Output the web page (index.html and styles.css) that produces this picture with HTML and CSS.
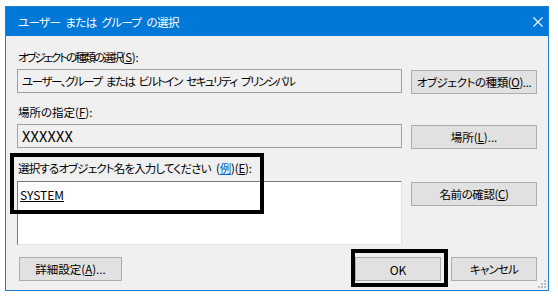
FILE: index.html
```html
<!DOCTYPE html>
<html lang="ja">
<head>
<meta charset="utf-8">
<title>ユーザー または グループ の選択</title>
<link rel="stylesheet" href="styles.css">
</head>
<body>
<div class="dlg">
  <div class="titlebar">
    <span class="title">ユーザー または グループ の選択</span>
    <span class="close"><svg width="10" height="10" viewBox="0 0 10 10"><path d="M0.5 0.5 L9.5 9.5 M9.5 0.5 L0.5 9.5" stroke="#fff" stroke-width="1.1" fill="none"/></svg></span>
  </div>
  <div class="body">
    <div class="grid">
      <div class="label first"><span class="jp">オブジェクトの種類の選択</span>(<u>S</u>):</div>
      <div class="field kana">ユーザー、グループ または ビルトイン セキュリティ プリンシパル</div>
      <div class="btn b1 bt-obj">オブジェクトの種類(<u>O</u>)...</div>

      <div class="label second">場所の指定(<u>F</u>):</div>
      <div class="field big">XXXXXX</div>
      <div class="btn b1">場所(<u>L</u>)...</div>

      <div class="label third"><span class="jp3">選択するオブジェクト名を入力してください</span> (<span class="link">例</span>)(<u>E</u>):</div>
      <div class="area"><u>SYSTEM</u></div>
      <div class="btn b3 bt-chk">名前の確認(<u>C</u>)</div>
    </div>
    <div class="footer">
      <div class="btn adv">詳細設定(<u>A</u>)...</div>
      <div class="right">
        <div class="btn ok">OK</div>
        <div class="btn cancel">キャンセル</div>
      </div>
    </div>
  </div>
  <div class="hl hl-name"></div>
  <div class="hl hl-ok"></div>
  <div class="grip">
    <i></i><i></i><i></i><i></i><i></i><i></i>
  </div>
</div>
</body>
</html>
```

FILE: styles.css
```css
html, body {
  margin: 0;
  padding: 0;
  background: #ffffff;
}
body {
  font-family: "Noto Sans CJK JP", "Noto Sans", sans-serif;
  font-size: 11.5px;
  color: #000;
  font-feature-settings: "palt" 1;
}
.dlg {
  position: relative;
  margin: 6px 0 0 5px;
  width: 544px;
  height: 285px;
  box-sizing: border-box;
  border: 1px solid #1f80d4;
  background: #f0f0f0;
}
.titlebar {
  height: 29px;
  background: #0078d7;
  display: flex;
  align-items: center;
  justify-content: space-between;
  padding: 0 0 0 12px;
}
.title {
  color: #fff;
  font-size: 11.5px;
  line-height: 16px;
  letter-spacing: -0.6px;
  word-spacing: 3px;
}
.close {
  width: 20px;
  height: 29px;
  display: flex;
  align-items: center;
  justify-content: center;
}
.close svg { display: block; }
.body {
  padding: 13px 11px 0 11px;
}
.grid {
  display: grid;
  grid-template-columns: 385px 1fr;
  column-gap: 9px;
  align-items: start;
}
.label {
  grid-column: 1 / span 2;
  height: 16px;
  line-height: 16px;
  padding-left: 1px;
  white-space: nowrap;
}
.first { letter-spacing: -0.2px; }
.first .jp { letter-spacing: -2.1px; }
.second { margin-top: 10px; }
.third { margin-top: 11px; letter-spacing: -0.2px; word-spacing: 3px; }
.third .jp3 { letter-spacing: -0.85px; }
.field {
  margin-top: 4px;
  height: 24px;
  box-sizing: border-box;
  border: 1px solid #a0a0a0;
  background: #f0f0f0;
  padding: 0 4px;
  line-height: 22px;
  white-space: nowrap;
  overflow: hidden;
}
.field.kana { letter-spacing: -1.45px; word-spacing: 3px; }
.field.big {
  font-size: 14.5px;
  letter-spacing: 0.2px;
}
.area {
  margin-top: 5px;
  height: 64px;
  box-sizing: border-box;
  background: #fff;
  border-top: 1px solid #7a7a7a;
  border-left: 1px solid #7a7a7a;
  border-right: 1px solid #e3e3e3;
  border-bottom: 1px solid #e3e3e3;
  padding: 5px 2px;
  line-height: 16px;
  font-size: 12px;
}
.btn {
  box-sizing: border-box;
  height: 24px;
  background: #e1e1e1;
  border: 1px solid #adadad;
  display: flex;
  align-items: center;
  justify-content: center;
  white-space: nowrap;
}
.b1 { margin-top: 5px; }
.b3 { margin-top: 6px; }
.bt-obj { letter-spacing: -0.4px; }
.bt-chk { letter-spacing: -0.4px; }
.footer {
  margin-top: 12px;
  display: flex;
  justify-content: space-between;
  align-items: center;
}
.adv {
  margin-left: 2px;
  width: 103px;
}
.right {
  display: flex;
  gap: 10px;
}
.ok, .cancel { width: 86px; }
.ok { font-size: 12px; }
.cancel { letter-spacing: -0.8px; }
.link {
  color: #0066cc;
  text-decoration: underline;
}
.hl {
  position: absolute;
  box-sizing: border-box;
  border: 4px solid #000;
}
.hl-name {
  left: 4px;
  top: 146px;
  width: 254px;
  height: 61px;
}
.hl-ok {
  left: 345px;
  top: 242px;
  width: 97px;
  height: 38px;
}
.grip {
  position: absolute;
  right: 2px;
  bottom: 2px;
  width: 8px;
  height: 8px;
}
.grip i {
  position: absolute;
  width: 2px;
  height: 2px;
  background: #bcbcbc;
}
.grip i:nth-child(1) { right: 0; bottom: 0; }
.grip i:nth-child(2) { right: 3px; bottom: 0; }
.grip i:nth-child(3) { right: 6px; bottom: 0; }
.grip i:nth-child(4) { right: 0; bottom: 3px; }
.grip i:nth-child(5) { right: 3px; bottom: 3px; }
.grip i:nth-child(6) { right: 0; bottom: 6px; }
```
